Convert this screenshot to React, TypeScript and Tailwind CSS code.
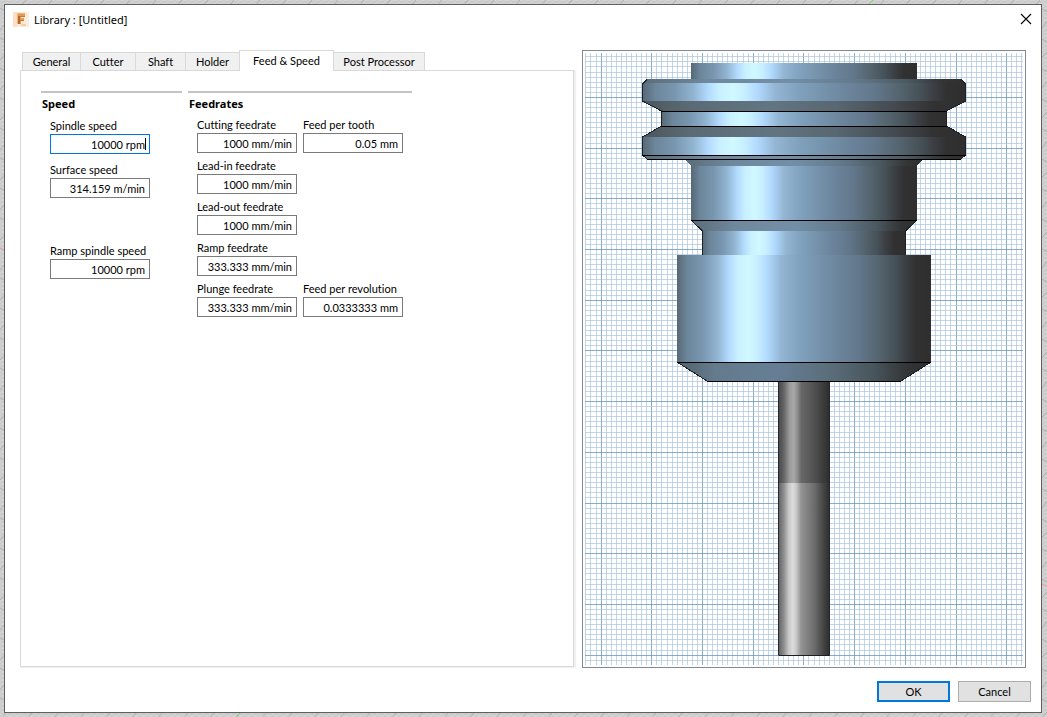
import React, { useState } from 'react';

const tabs = [
  { name: 'General', width: 'w-[59px]' },
  { name: 'Cutter', width: 'w-[56px]' },
  { name: 'Shaft', width: 'w-[51px]' },
  { name: 'Holder', width: 'w-[55px]' },
  { name: 'Feed & Speed', width: 'w-[95px]' },
  { name: 'Post Processor', width: 'w-[92px]' },
];

// grid of the tool preview
const GRID_W = 438;
const GRID_H = 612;
const STEP = 5.07;

const gridLines = (start: number, step: number, size: number) => {
  const lines: { pos: number; major: boolean }[] = [];
  for (let i = -12; i < 140; i++) {
    const pos = Math.floor(start + step * i);
    if (pos >= 0 && pos < size) lines.push({ pos, major: i % 10 === 0 });
  }
  return lines;
};

const columns = gridLines(16.1, STEP, GRID_W);
const rows = gridLines(44.4, STEP, GRID_H);

// holder silhouette from top to bottom
const holderParts = [
  { points: '106,10 332,10 332,26 106,26', fill: 'url(#metal)' },
  { points: '62,26 376,26 381,30 57,30', fill: 'url(#bevel)' },
  { points: '57,30 381,30 381,48 57,48', fill: 'url(#metal)' },
  { points: '57,48 381,48 362,58 76,58', fill: 'url(#shade)' },
  { points: '76,58 362,58 362,73 76,73', fill: 'url(#metal)' },
  { points: '76,73 362,73 381,84 57,84', fill: 'url(#shade)' },
  { points: '57,84 381,84 381,102 57,102', fill: 'url(#metal)' },
  { points: '57,102 381,102 376,106 62,106', fill: 'url(#bevel)' },
  { points: '100,106 338,106 332,113 106,113', fill: 'url(#bevel)' },
  { points: '106,113 332,113 332,167 106,167', fill: 'url(#metal)' },
  { points: '106,167 332,167 321,178 117,178', fill: 'url(#bevel)' },
  { points: '117,178 321,178 321,202 117,202', fill: 'url(#metal)' },
  { points: '92,202 346,202 346,309 92,309', fill: 'url(#metal)' },
  { points: '92,309 346,309 316,328 122,328', fill: 'url(#cone)' },
];

const edges = [
  [76, 362, 58],
  [76, 362, 73],
  [57, 381, 102],
  [62, 376, 106],
  [106, 332, 167],
  [92, 346, 309],
  [122, 316, 328],
];

const ToolPreview: React.FC = () => (
  <svg viewBox="0 0 438 612" className="block h-full w-full" shapeRendering="crispEdges" role="img" aria-label="Tool preview">
    <defs>
      <linearGradient id="metal">
        <stop offset="0" stopColor="#566875" />
        <stop offset="0.04" stopColor="#6c869a" />
        <stop offset="0.1" stopColor="#7896af" />
        <stop offset="0.16" stopColor="#92b5d2" />
        <stop offset="0.205" stopColor="#b3dbff" />
        <stop offset="0.24" stopColor="#c9f0ff" />
        <stop offset="0.28" stopColor="#d0f8ff" />
        <stop offset="0.315" stopColor="#c8efff" />
        <stop offset="0.355" stopColor="#b2daff" />
        <stop offset="0.41" stopColor="#94b6d4" />
        <stop offset="0.49" stopColor="#7fa0bb" />
        <stop offset="0.62" stopColor="#6d879f" />
        <stop offset="0.72" stopColor="#62778b" />
        <stop offset="0.8" stopColor="#53636c" />
        <stop offset="0.86" stopColor="#465057" />
        <stop offset="0.9" stopColor="#3b3f44" />
        <stop offset="0.94" stopColor="#313131" />
        <stop offset="1" stopColor="#2f2f2f" />
      </linearGradient>
      <linearGradient id="bevel">
        <stop offset="0" stopColor="#5a6c78" />
        <stop offset="0.2" stopColor="#6f889d" />
        <stop offset="0.45" stopColor="#738fa7" />
        <stop offset="0.65" stopColor="#637a8c" />
        <stop offset="0.82" stopColor="#4b5860" />
        <stop offset="0.93" stopColor="#333435" />
        <stop offset="1" stopColor="#2f2f2f" />
      </linearGradient>
      <linearGradient id="shade">
        <stop offset="0" stopColor="#4b555b" />
        <stop offset="0.15" stopColor="#5b6b75" />
        <stop offset="0.4" stopColor="#627582" />
        <stop offset="0.6" stopColor="#586771" />
        <stop offset="0.78" stopColor="#444a50" />
        <stop offset="0.9" stopColor="#323233" />
        <stop offset="1" stopColor="#2f2f2f" />
      </linearGradient>
      <linearGradient id="cone">
        <stop offset="0" stopColor="#50606a" />
        <stop offset="0.15" stopColor="#647b8e" />
        <stop offset="0.4" stopColor="#667e95" />
        <stop offset="0.6" stopColor="#5a6e7a" />
        <stop offset="0.78" stopColor="#47545b" />
        <stop offset="0.91" stopColor="#323334" />
        <stop offset="1" stopColor="#2f2f2f" />
      </linearGradient>
      <linearGradient id="shank">
        <stop offset="0" stopColor="#454545" />
        <stop offset="0.12" stopColor="#686868" />
        <stop offset="0.22" stopColor="#9a9a9a" />
        <stop offset="0.3" stopColor="#a9a9a9" />
        <stop offset="0.36" stopColor="#949494" />
        <stop offset="0.45" stopColor="#686868" />
        <stop offset="0.7" stopColor="#505050" />
        <stop offset="0.92" stopColor="#363636" />
        <stop offset="1" stopColor="#2c2c2c" />
      </linearGradient>
      <linearGradient id="flute">
        <stop offset="0" stopColor="#5c5c5c" />
        <stop offset="0.12" stopColor="#929292" />
        <stop offset="0.2" stopColor="#c4c4c4" />
        <stop offset="0.28" stopColor="#dcdcdc" />
        <stop offset="0.35" stopColor="#cacaca" />
        <stop offset="0.44" stopColor="#949494" />
        <stop offset="0.7" stopColor="#6c6c6c" />
        <stop offset="0.9" stopColor="#3f3f3f" />
        <stop offset="1" stopColor="#2c2c2c" />
      </linearGradient>
    </defs>

    {columns.map(({ pos, major }) => (
      <rect key={`c${pos}`} x={pos} y={0} width={1} height={GRID_H} fill={major ? '#6491bb' : '#a5c0db'} fillOpacity={major ? 0.75 : 0.65} />
    ))}
    {rows.map(({ pos, major }) => (
      <rect key={`r${pos}`} x={0} y={pos} width={GRID_W} height={1} fill={major ? '#6491bb' : '#a5c0db'} fillOpacity={major ? 0.75 : 0.65} />
    ))}

    {/* cutter */}
    <rect x={193} y={328} width={52} height={102} fill="url(#shank)" />
    <rect x={193} y={430} width={52} height={173} fill="url(#flute)" />
    <rect x={193} y={328} width={1} height={274} fill="#222831" />
    <rect x={244} y={328} width={1} height={274} fill="#222831" />
    <rect x={194} y={602} width={50} height={1} fill="#1c1c22" />

    {/* holder */}
    {holderParts.map((part) => (
      <polygon key={part.points} points={part.points} fill={part.fill} />
    ))}
    <path
      d="M62 26.5L57.5 31V48L76.5 58V73L57.5 84V102L62 106M376 26.5L380.5 31V48L361.5 58V73L380.5 84V102L376 106M106 167L117.5 178V202M332 167L320.5 178V202M92 309L122 328M346 309L316 328"
      fill="none"
      stroke="#1d2226"
    />
    {edges.map(([from, to, y]) => (
      <rect key={y} x={from} y={y} width={to - from} height={1} fill="#000" />
    ))}
  </svg>
);

// viewport of the main window, visible around the dialog
const Backdrop: React.FC = () => (
  <svg className="absolute inset-0 h-full w-full" aria-hidden="true">
    <defs>
      <pattern id="fine" width="7" height="4" patternUnits="userSpaceOnUse">
        <path d="M0 4L7 0M0 1L7 3" stroke="#bdbdbf" strokeWidth="0.6" />
      </pattern>
      <pattern id="coarse" width="26" height="30" patternUnits="userSpaceOnUse">
        <path d="M0 30L26 0M0 8L26 22" stroke="#a6a6a8" strokeWidth="0.8" />
      </pattern>
    </defs>
    <rect width="100%" height="100%" fill="#d5d4d5" />
    <rect width="100%" height="100%" fill="url(#fine)" />
    <rect width="100%" height="100%" fill="url(#coarse)" />
    <path d="M868 5L873 0M236 717L241 712" stroke="#6fdc6f" />
    <path d="M0 248L4 250M1042 584L1047 586" stroke="#ee9aa4" />
  </svg>
);

const AppIcon: React.FC = () => (
  <svg viewBox="0 0 16 16" className="h-4 w-4" aria-hidden="true">
    <rect width="16" height="15" fill="#fdebdb" />
    <path d="M0 0H4V15H0Z" fill="#fcdfc6" />
    <path d="M4 1H12V4H8V6H11V9H8V12H4Z" fill="#e59a50" />
    <path d="M4 1H12V2H5V12H4Z" fill="#f0b47a" />
    <path d="M5 4H7V12H5Z" fill="#b5692c" />
    <path d="M7 4H12V5H7ZM7 8H11V9H7Z" fill="#c47632" />
    <path d="M8 12H13V14H8Z" fill="#f9cda5" />
  </svg>
);

interface FieldProps {
  id: string;
  label: string;
  value: string;
  focused?: boolean;
}

const Field: React.FC<FieldProps> = ({ id, label, value, focused }) => (
  <div className="w-[100px]">
    <label htmlFor={id} className="block h-4 whitespace-nowrap leading-4">
      {label}
    </label>
    <div className="relative">
      <input
        id={id}
        type="text"
        defaultValue={value}
        className={`block h-5 w-full border bg-white px-1 text-right outline-none ${
          focused ? 'border-[#0078d7]' : 'border-[#7a7a7a]'
        }`}
      />
      {focused && <span className="absolute top-1 right-1 h-3 w-px bg-black" />}
    </div>
  </div>
);

const App: React.FC = () => {
  const [activeTab, setActiveTab] = useState('Feed & Speed');

  return (
    <div className="relative flex min-h-screen pt-1 pr-[5px] pb-1 pl-1 font-[Lato,sans-serif] text-[11px] text-black [font-variant-ligatures:none]">
      <Backdrop />

      <div role="dialog" aria-label="Library" className="relative flex flex-1 flex-col border border-[#5f5f5f] bg-white">
        <header className="flex h-[45px] items-start justify-between pt-[7px] pr-2 pl-2">
          <div className="flex items-center gap-[5px]">
            <AppIcon />
            <h1 className="font-['Noto_Sans',sans-serif] leading-4">Library : [Untitled]</h1>
          </div>
          <button aria-label="Close" className="p-px">
            <svg viewBox="0 0 12 12" className="h-3 w-3">
              <path d="M1 1L11 11M11 1L1 11" stroke="#000" strokeWidth="1.1" />
            </svg>
          </button>
        </header>

        <main className="grid flex-1 grid-cols-[139fr_111fr] gap-[6px] pr-[15px] pl-[15px]">
          <section className="flex flex-col">
            <div role="tablist" className="flex h-5 items-end pl-[2px]">
              {tabs.map(({ name, width }) => (
                <button
                  key={name}
                  role="tab"
                  aria-selected={activeTab === name}
                  onClick={() => setActiveTab(name)}
                  className={`-mr-px border border-b-0 border-[#d9d9d9] pt-px whitespace-nowrap ${width} ${
                    activeTab === name ? 'relative z-10 -mb-px h-[21px] bg-white' : 'h-[18px] bg-[#f0f0f0]'
                  }`}
                >
                  {name}
                </button>
              ))}
            </div>

            <div className="flex flex-1 bg-[#f0f0f0] pr-[2px] pb-px">
              <div role="tabpanel" className="flex flex-1 items-start gap-[6px] border border-[#d9d9d9] bg-white p-5">
                <div className="w-[141px] border-t-2 border-[#c4c4c4]">
                  <h2 className="pl-px font-['Noto_Sans',sans-serif] leading-[22px] font-bold">Speed</h2>
                  <div className="flex flex-col gap-2 pt-[3px] pl-[9px]">
                    <Field id="spindle" label="Spindle speed" value="10000 rpm" focused />
                    <Field id="surface" label="Surface speed" value="314.159 m/min" />
                    <div className="pt-[37px]">
                      <Field id="ramp-spindle" label="Ramp spindle speed" value="10000 rpm" />
                    </div>
                  </div>
                </div>

                <div className="w-[224px] border-t-2 border-[#c4c4c4]">
                  <h2 className="pl-px font-['Noto_Sans',sans-serif] leading-[22px] font-bold">Feedrates</h2>
                  <div className="grid grid-cols-[100px_100px] gap-x-[6px] gap-y-[5px] pt-[2px] pl-[9px]">
                    <Field id="cutting" label="Cutting feedrate" value="1000 mm/min" />
                    <Field id="per-tooth" label="Feed per tooth" value="0.05 mm" />
                    <div className="col-span-2">
                      <Field id="lead-in" label="Lead-in feedrate" value="1000 mm/min" />
                    </div>
                    <div className="col-span-2">
                      <Field id="lead-out" label="Lead-out feedrate" value="1000 mm/min" />
                    </div>
                    <div className="col-span-2">
                      <Field id="ramp" label="Ramp feedrate" value="333.333 mm/min" />
                    </div>
                    <Field id="plunge" label="Plunge feedrate" value="333.333 mm/min" />
                    <Field id="per-revolution" label="Feed per revolution" value="0.0333333 mm" />
                  </div>
                </div>
              </div>
            </div>
          </section>

          <section className="border border-[#828790] bg-white p-[2px]">
            <ToolPreview />
          </section>
        </main>

        <footer className="flex justify-end gap-2 pt-[13px] pr-[10px] pb-[10px]">
          <button className="h-[21px] w-[73px] border-2 border-[#0078d7] bg-[#e1e1e1] pt-px">OK</button>
          <button className="h-[21px] w-[73px] border border-[#adadad] bg-[#e1e1e1] pt-px">Cancel</button>
        </footer>
      </div>
    </div>
  );
};

export default App;
